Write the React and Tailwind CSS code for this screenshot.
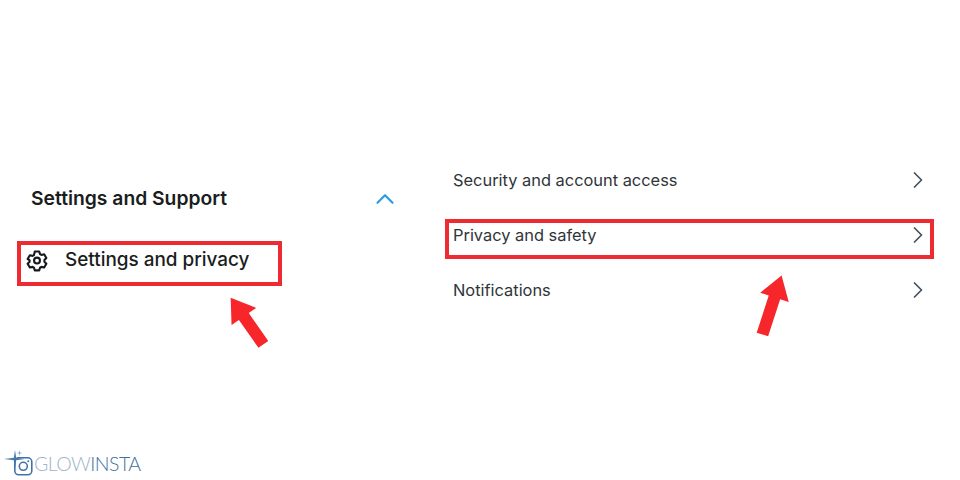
import React from 'react';
import { ChevronUp, ChevronRight } from 'lucide-react';

const font = "[font-family:Inter,'Liberation_Sans',sans-serif]";

const GearIcon = () => (
    <svg width="22" height="22" viewBox="0 0 24 24" fill="none" stroke="#16191c" strokeWidth="2.300" strokeLinejoin="round" className="shrink-0">
        <path d="M9.6 2.600h4.800l.9 2.900 1.500.9 3-.7 2.400 4.100-2.100 2.200v1.800l2.100 2.200-2.400 4.100-3-.7-1.500.9-.9 2.900H9.600l-.9-2.900-1.500-.9-3 .7-2.400-4.100 2.100-2.200v-1.800L1.800 10.800l2.400-4.100 3 .7 1.500-.9z" transform="translate(0 -1)" />
        <circle cx="12" cy="11.500" r="3.200" />
    </svg>
);

// drawn around the middle of a 70x70 box, tip pointing up before rotation
const RedArrow = ({ className, rotate, length }) => {
    const top = 35 - length / 2;
    const bottom = 35 + length / 2;
    const neck = top + 23;
    return (
        <svg className={className} width="70" height="70" viewBox="0 0 70 70">
            <g transform={`rotate(${rotate} 35 35)`}>
                <path d={`M35 ${top} L50 ${neck} L41 ${neck} L41 ${bottom} L29 ${bottom} L29 ${neck} L20 ${neck} Z`} fill="#f7262b" />
            </g>
        </svg>
    );
};

const Logo = () => (
    <div className="flex items-center h-[26px]">
        <svg width="30" height="28" viewBox="0 0 30 28" fill="none" className="shrink-0">
            <path d="M11 0 L12.200 7.800 L21 9 L12.200 10.200 L11 19 L9.800 10.200 L0 9 L9.800 7.800 Z" fill="#4a7cb0" />
            <path d="M15.500 0 L16 2.500 L18.500 3 L16 3.500 L15.500 6 L15 3.500 L12.500 3 L15 2.500 Z" fill="#7fa3c9" />
            <rect x="10.800" y="7.800" width="17" height="17" rx="4" stroke="#3f74ab" strokeWidth="1.600" />
            <circle cx="19.300" cy="16.300" r="4" stroke="#3f74ab" strokeWidth="1.600" />
            <circle cx="24.300" cy="11.300" r="1" fill="#3f74ab" />
        </svg>
        <span className="text-[19.500px] leading-none font-light tracking-[-0.6px] text-[#9db4ca] [font-family:Lato,sans-serif]">GLOW</span>
        <span className="text-[19.500px] leading-none font-light tracking-[-0.5px] text-[#41719f] [font-family:Lato,sans-serif]">INSTA</span>
    </div>
);

const MenuRow = ({ label, highlighted }) => (
    <div className="relative flex items-center justify-between h-10 pl-2 pr-[2px]">
        <span className="text-[16.400px] leading-none text-[#2f3438]">{label}</span>
        <ChevronRight size={28} strokeWidth={1.500} className="text-[#45525e]" />
        {highlighted && <div className="absolute inset-x-0 top-[4px] h-10 border-4 border-[#ee2b32]" />}
    </div>
);

const App = () => {
    return (
        <div className={`relative h-[480px] w-[960px] bg-white overflow-hidden ${font}`}>
            <div className="flex h-full">
                <div className="w-[445px] shrink-0 flex flex-col pt-[185px] pl-[17px]">
                    <div className="flex items-center justify-between h-7 pl-[14px] pr-[45px]">
                        <h2 className="text-[19.300px] leading-none font-semibold text-[#1a1d20]">Settings and Support</h2>
                        <ChevronUp size={30} strokeWidth={1.800} className="text-[#2d9fe0]" />
                    </div>
                    <div className="mt-[28px] flex items-center h-[45px] w-[265px] border-4 border-[#ee2b32] pl-[5px] pb-[6px]">
                        <GearIcon />
                        <span className="ml-[17px] text-[18.900px] leading-none font-medium text-[#1a1d20]">Settings and privacy</span>
                    </div>
                    <div className="mt-auto mb-[3px] -ml-[13px]">
                        <Logo />
                    </div>
                </div>
                <div className="w-[489px] flex flex-col gap-[15px] pt-[160px]">
                    <MenuRow label="Security and account access" />
                    <MenuRow label="Privacy and safety" highlighted />
                    <MenuRow label="Notifications" />
                </div>
            </div>
            <RedArrow className="absolute left-[212px] top-[286px]" rotate={-35} length={57} />
            <RedArrow className="absolute left-[737px] top-[270px]" rotate={18} length={62} />
        </div>
    );
};

export default App;
